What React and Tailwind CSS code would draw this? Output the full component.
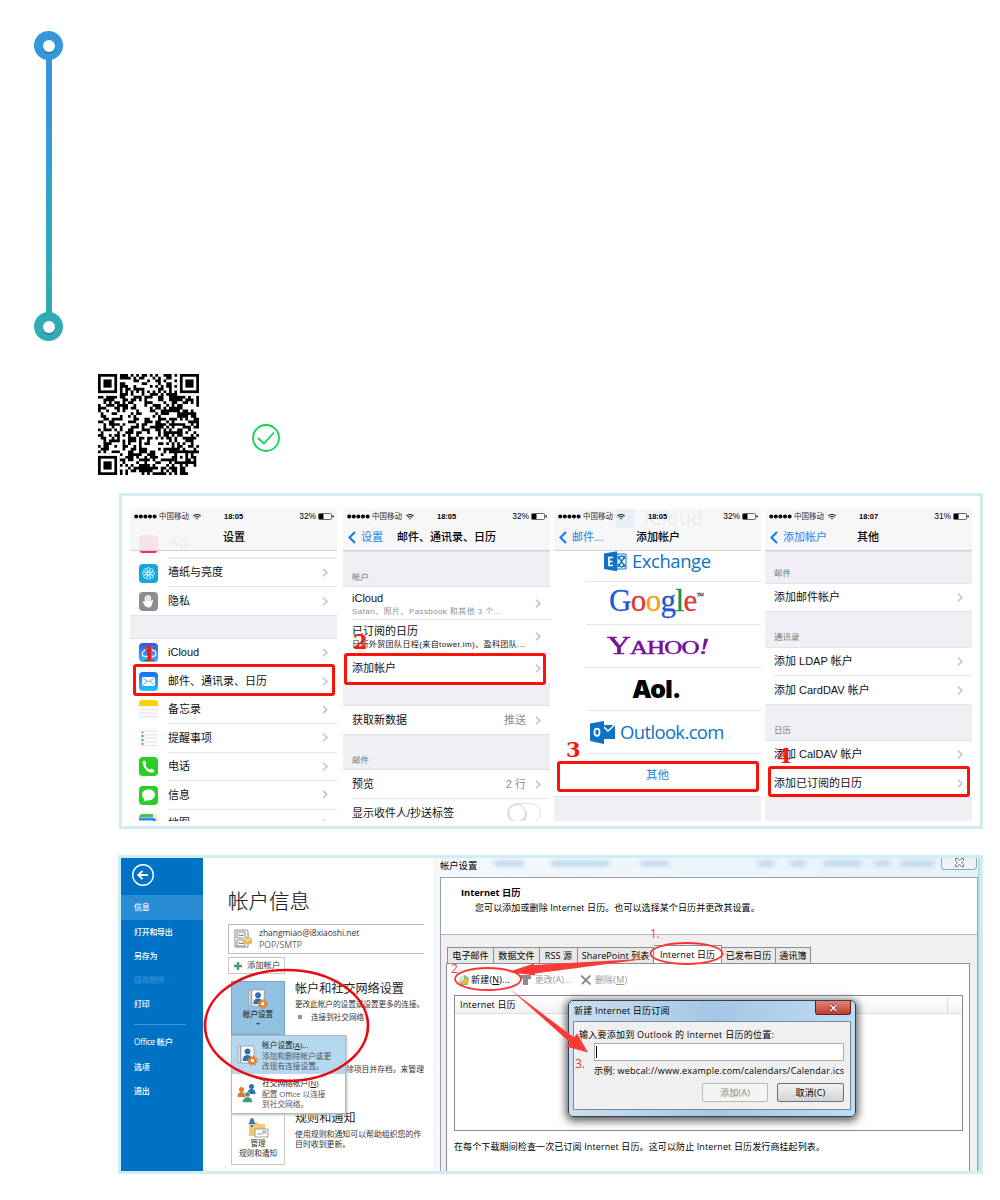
import React from "react";

const FINDER = (x, y) => (
  <g key={x + "-" + y}>
    <rect x={x - 1} y={y - 1} width="9" height="9" fill="#fff" />
    <rect x={x + 0.5} y={y + 0.5} width="6" height="6" fill="none" stroke="#000" strokeWidth="1" />
    <rect x={x + 2} y={y + 2} width="3" height="3" />
  </g>
);

function QrCode() {
  const n = 37;
  let seed = 90217;
  const cells = [];
  for (let y = 0; y < n; y++) {
    for (let x = 0; x < n; x++) {
      seed = (seed * 1103515245 + 12345) % 2147483648;
      const timing = x === 6 || y === 6;
      if (timing ? (x + y) % 2 === 0 : (seed >> 12) % 100 < 50) cells.push(`M${x} ${y}h1v1h-1z`);
    }
  }
  return (
    <svg className="block size-[101px]" viewBox="0 0 37 37" shapeRendering="geometricPrecision">
      <path d={cells.join("")} />
      {FINDER(0, 0)}
      {FINDER(30, 0)}
      {FINDER(0, 30)}
      <rect x="28" y="28" width="5" height="5" fill="#000" />
      <rect x="29" y="29" width="3" height="3" fill="#fff" />
      <rect x="30" y="30" width="1" height="1" />
    </svg>
  );
}

function Chevron() {
  return (
    <svg className="h-[9px] w-[6px] shrink-0" viewBox="0 0 6 9" fill="none" stroke="#b9b9be" strokeWidth="1.2">
      <path d="M1 .8 5 4.5 1 8.2" />
    </svg>
  );
}

function Header({ time, pct, back, title, titleClass, children }) {
  return (
    <div className="relative h-[42px] shrink-0 overflow-hidden border-b border-[#cfcfd2] bg-[#f7f7f8]">
      {children}
      <div className="relative flex h-[15px] items-center pl-[4px] pr-[3px] text-[7.5px] text-black">
        <svg className="h-[5px] w-[23px]" viewBox="0 0 23 5">
          {[2.2, 6.8, 11.4, 16, 20.6].map((x) => (
            <circle key={x} cx={x} cy="2.5" r="2" />
          ))}
        </svg>
        <span className="ml-[2px] w-[31px] whitespace-nowrap text-[#333]">中国移动</span>
        <svg className="ml-[3px] h-[6px] w-[8px]" viewBox="0 0 8 6" fill="none" stroke="#222" strokeWidth="1.1">
          <path d="M.4 2Q4-1 7.6 2M1.7 3.4Q4 1.6 6.3 3.4" />
          <path d="M3.2 4.8h1.6" />
        </svg>
        <span className="ml-[23px] w-[20px] whitespace-nowrap font-bold">{time}</span>
        <span className="ml-auto text-[8.4px]">{pct}</span>
        <svg className="ml-[2px] h-[7px] w-[16px]" viewBox="0 0 16 7">
          <rect x=".5" y=".5" width="13" height="6" rx="1" fill="#fff" stroke="#444" strokeWidth=".8" />
          <rect x="1" y="1" width="4.5" height="5" />
          <rect x="14.4" y="2.4" width="1.3" height="2" />
        </svg>
      </div>
      <div className="relative flex h-[26px] items-center text-[11px] leading-none">
        {back && (
          <span className="flex items-center whitespace-nowrap pl-[5px] text-[#1187f5]">
            <svg className="mr-[5px] h-[13px] w-[8px]" viewBox="0 0 8 13" fill="none" stroke="#0a7cf5" strokeWidth="2">
              <path d="M7 1 1.5 6.5 7 12" />
            </svg>
            {back}
          </span>
        )}
        <span className={"absolute whitespace-nowrap font-medium text-black " + titleClass}>{title}</span>
      </div>
    </div>
  );
}

function Phone({ children, className }) {
  return (
    <div className={"flex h-[312px] w-[207px] shrink-0 flex-col overflow-hidden bg-white text-[11px] text-[#111] " + className}>
      {children}
    </div>
  );
}

function AppRow({ icon, label, className = "", line = true }) {
  return (
    <div className={"flex shrink-0 items-center pl-[9px] " + className}>
      <div className="size-[19px] shrink-0">{icon}</div>
      <div className={"ml-[10px] flex h-full flex-1 items-center justify-between pr-[9px] " + (line ? "border-b border-[#e6e6e8]" : "")}>
        <span className="whitespace-nowrap">{label}</span>
        <Chevron />
      </div>
    </div>
  );
}

function Row({ label, value, className = "", line }) {
  return (
    <div className={"shrink-0 pl-[9px] " + className}>
      <div className={"flex h-full items-center justify-between pr-[9px] " + (line ? "border-b border-[#e6e6e8]" : "")}>
        <span className="whitespace-nowrap">{label}</span>
        <span className="flex items-center gap-[9px] text-[#8e8e93]">
          {value}
          <Chevron />
        </span>
      </div>
    </div>
  );
}

function Gap({ children, className }) {
  return (
    <div className={"flex shrink-0 items-end border-y border-[#e2e2e6] bg-[#efeff4] pl-[9px] text-[8.5px] text-[#77777c] " + className}>
      {children}
    </div>
  );
}

function Mark({ children, className }) {
  return (
    <span className={"absolute font-['DejaVu_Serif'] text-[21px] font-bold leading-none text-[#f8190c] " + className}>{children}</span>
  );
}

function RedBox({ className }) {
  return <div className={"absolute rounded-[3px] border-[3px] border-[#fb120a] " + className} />;
}

const icons = {
  wallpaper: (
    <svg viewBox="0 0 19 19">
      <rect width="19" height="19" rx="4" fill="#14a5dc" />
      <g fill="none" stroke="#d8f4ff" strokeWidth=".9">
        {[0, 45, 90, 135, 180, 225, 270, 315].map((a) => (
          <ellipse key={a} cx="9.5" cy="5.8" rx="1.7" ry="2.3" transform={`rotate(${a} 9.5 9.5)`} />
        ))}
        <circle cx="9.5" cy="9.5" r="1.5" />
      </g>
    </svg>
  ),
  privacy: (
    <svg viewBox="0 0 19 19">
      <rect width="19" height="19" rx="4" fill="#8c8c91" />
      <path d="M6 14 3.6 9.8q.7-1.3 2 0V5.2q.7-1.2 1.5 0V3.8q.8-1.1 1.6 0V3.2q.9-1 1.7 0v1q.9-.9 1.6.2v5l1-1.6q1.3-.3 1 .9L12.4 14q-2.500 3-6.400 0z" fill="#fff" />
      <path d="M7.200 5v4M8.900 4v5M10.600 4v5" stroke="#8c8c91" strokeWidth=".4" />
    </svg>
  ),
  icloud: (
    <svg viewBox="0 0 19 19">
      <defs>
        <linearGradient id="ic" x2="0" y2="1"><stop stopColor="#3a55dc" /><stop offset="1" stopColor="#34b8fa" /></linearGradient>
      </defs>
      <rect width="19" height="19" rx="4" fill="url(#ic)" />
      <path d="M5 13.500a3 3 0 0 1 0-5.500 4.500 4.500 0 0 1 8.500-.5 3 3 0 0 1 .8 6z" fill="none" stroke="#e4f4ff" strokeWidth="1.300" />
    </svg>
  ),
  mail: (
    <svg viewBox="0 0 19 19">
      <defs>
        <linearGradient id="ml" x2="0" y2="1"><stop stopColor="#1b6cf0" /><stop offset="1" stopColor="#22c6fb" /></linearGradient>
      </defs>
      <rect width="19" height="19" rx="4" fill="url(#ml)" />
      <rect x="3" y="5" width="13" height="9" rx="1" fill="#fff" />
      <path d="m3.500 5.500 6 4.500 6-4.500M3.500 13.500 8 9.200M15.500 13.500 11 9.200" fill="none" stroke="#3c9af3" strokeWidth=".8" />
    </svg>
  ),
  notes: (
    <svg viewBox="0 0 19 19">
      <rect width="19" height="19" rx="3" fill="#fbfbfb" />
      <path d="M0 6V3q0-3 3-3h13q3 0 3 3v3z" fill="#fdce0c" />
      <path d="M0 9.500h19M0 13h19M0 16.500h19" stroke="#dedede" strokeWidth=".8" />
    </svg>
  ),
  reminders: (
    <svg viewBox="0 0 19 19">
      <rect width="19" height="19" rx="3" fill="#fbfbfb" />
      <path d="M6 2h13M6 5.700h13M6 9.400h13M6 13h13M6 16.500h13" stroke="#dedede" strokeWidth=".8" />
      <circle cx="3.500" cy="3.200" r="1.200" fill="#ff9b21" />
      <circle cx="3.500" cy="7" r="1.200" fill="#1aa1f0" />
      <circle cx="3.500" cy="11" r="1.200" fill="#38cd38" />
      <circle cx="3.500" cy="15" r="1.200" fill="#ca69dc" />
    </svg>
  ),
  phone: (
    <svg viewBox="0 0 19 19">
      <rect width="19" height="19" rx="4" fill="#29cf25" />
      <path d="M5.500 3.300 7.400 6.500 6.300 8q1.500 3.400 4.600 4.800l1.500-1.200 3.200 2q-.8 2.300-2.900 2.200Q6 14.800 3.600 6.500q-.3-2.200 1.900-3.200z" fill="#fff" />
    </svg>
  ),
  messages: (
    <svg viewBox="0 0 19 19">
      <rect width="19" height="19" rx="4" fill="#29cf25" />
      <ellipse cx="9.500" cy="8.800" rx="6.500" ry="5.600" fill="#fff" />
      <path d="m5.500 12-.8 3.500 4-1.500z" fill="#fff" />
    </svg>
  ),
  maps: (
    <svg viewBox="0 0 19 19">
      <rect width="19" height="19" rx="4" fill="#f2f0e6" />
      <path d="M0 4q0-4 4-4h10v3H0z" fill="#4dc343" />
      <path d="M0 5h13q3 0 3 4v10" stroke="#2f8eea" strokeWidth="3" fill="none" />
      <path d="M0 8.500h11v6H0z" fill="#f8d66c" />
    </svg>
  ),
};

function PhonesPanel() {
  return (
    <div className="relative ml-[119px] mt-[19px] h-[336px] w-[864px] border-[3px] border-[#d0edf2] bg-white pl-[8px] pt-[13px] font-['Liberation_Sans','Noto_Sans_CJK_SC',sans-serif]">
      <div className="flex">
        <Phone className="">
          <Header time="18:05" pct="32%" title="设置" titleClass="left-[93px]">
            <div className="absolute left-[9px] top-[26px] flex items-center gap-[10px] text-[#ececee]">
              <div className="size-[19px] rounded-[4px] bg-[#fbe2e8]" />
              声音
            </div>
          </Header>
          <div className="flex h-[8px] shrink-0 pl-[10px]">
            <div className="h-[2px] w-[17px] rounded-b-[3px] bg-[#f52c5c]" />
            <div className="ml-[11px] flex-1 border-b-2 border-[#ececee]" />
          </div>
          <AppRow icon={icons.wallpaper} label="墙纸与亮度" className="h-[28px]" />
          <AppRow icon={icons.privacy} label="隐私" className="h-[28px]" line={false} />
          <Gap className="h-[24px]" />
          <AppRow icon={icons.icloud} label="iCloud" className="h-[28px] pb-[1px]" line={false} />
          <AppRow icon={icons.mail} label="邮件、通讯录、日历" className="h-[28.5px]" line={false} />
          <AppRow icon={icons.notes} label="备忘录" className="h-[28.5px]" />
          <AppRow icon={icons.reminders} label="提醒事项" className="h-[28.5px]" />
          <AppRow icon={icons.phone} label="电话" className="h-[28.5px]" />
          <AppRow icon={icons.messages} label="信息" className="h-[28.5px]" />
          <AppRow icon={icons.maps} label="地图" className="h-[28.5px]" />
        </Phone>

        <Phone className="ml-[6px]">
          <Header time="18:05" pct="32%" back="设置" title="邮件、通讯录、日历" titleClass="left-[54px]" />
          <Gap className="h-[36px] pb-[2px]">帐户</Gap>
          <Row
            className="h-[33px]"
            line
            label={
              <span className="flex flex-col pt-[3px] leading-[13px]">
                <span>iCloud</span>
                <span className="text-[8px] tracking-[0.4px] text-[#8e8e93]">Safari、照片、Passbook 和其他 3 个...</span>
              </span>
            }
          />
          <Row
            className="h-[34px]"
            line
            label={
              <span className="flex w-[176px] flex-col pt-[3px] leading-[13px]">
                <span>已订阅的日历</span>
                <span className="text-[8px] tracking-[0.4px]">日新外贸团队日程(来自tower.im)、盈科团队...</span>
              </span>
            }
          />
          <Row className="h-[29px]" label="添加帐户" />
          <Gap className="h-[23px]" />
          <Row className="h-[28px]" label="获取新数据" value="推送" />
          <Gap className="h-[36px] pb-[2px]">邮件</Gap>
          <Row className="h-[29px]" label="预览" value="2 行" line />
          <div className="flex h-[28px] shrink-0 items-center justify-between pl-[9px] pr-[9px]">
            <span>显示收件人/抄送标签</span>
            <div className="h-[20px] w-[34px] rounded-full border border-[#e0e0e2] bg-white">
              <div className="size-[18px] rounded-full border border-[#cfcfd2] shadow-[1px_2px_2px_#ddd]" />
            </div>
          </div>
        </Phone>

        <Phone className="ml-[4px]">
          <Header time="18:05" pct="32%" back="邮件..." title="添加帐户" titleClass="left-[82px]">
            <div className="absolute left-[61px] top-[-2px] flex items-center gap-[9px] font-['Open_Sans'] text-[20px] leading-[22px] text-[#ebebed]">
              <div className="size-[20px] rounded-[4px] bg-[#e8f0fa]" />
              iCloud
            </div>
          </Header>
          <div className="ml-[32px] flex h-[31px] shrink-0 items-start border-b border-[#e6e6e8] pl-[17px] font-['Open_Sans'] text-[18.5px] leading-[20px] tracking-[-0.45px] text-[#0e72c6]">
            <svg className="mr-[3px] h-[21px] w-[26px]" viewBox="0 0 26 21">
              <path d="M14 3h9v15h-9z" fill="#fff" stroke="#0e72c6" />
              <path d="m15 5 7 11M22 5l-7 11M15 8q4-6 7 0M15 13q4 6 7 0" fill="none" stroke="#0e72c6" strokeWidth="1.400" />
              <path d="m1 2.500 13-2.300v20L1 18z" fill="#0e72c6" />
              <path d="M10 6.500H6v8h4M6 10.500h3.500" stroke="#fff" strokeWidth="1.700" fill="none" />
            </svg>
            Exchange
          </div>
          <div className="ml-[32px] flex h-[43px] shrink-0 items-start border-b border-[#e6e6e8] pl-[23px] pt-[2px] font-['Liberation_Serif'] text-[31px] leading-[34px] tracking-[-0.6px] [-webkit-text-stroke:0.3px]">
            <span className="text-[#2456d4]">G</span>
            <span className="text-[#dd3838]">o</span>
            <span className="text-[#efa416]">o</span>
            <span className="text-[#2456d4]">g</span>
            <span className="text-[#179341]">l</span>
            <span className="text-[#dd3838]">e</span>
            <span className="mt-[8px] text-[5px] leading-none text-[#555]">TM</span>
          </div>
          <div className="ml-[32px] flex h-[43px] shrink-0 items-center border-b border-[#e6e6e8] pb-[2px] pl-[21px] font-['Liberation_Serif'] leading-none text-[#77159a]">
            <span className="flex origin-left scale-x-[1.32] items-baseline tracking-[-0.7px] [-webkit-text-stroke:0.5px]">
              <span className="text-[25px]">Y</span>
              <span className="text-[19px]">AHOO</span>
              <span className="text-[24px] italic">!</span>
            </span>
          </div>
          <div className="ml-[32px] flex h-[43px] shrink-0 items-center border-b border-[#e6e6e8] pl-[46px] font-['Inter'] text-[25px] font-black leading-none tracking-[-0.6px] text-black">
            Aol.
          </div>
          <div className="ml-[32px] flex h-[43px] shrink-0 items-center border-b border-[#e6e6e8] pl-[4px] font-['Open_Sans'] text-[18.500px] tracking-[-0.65px] text-[#0e72c6]">
            <svg className="mr-[4px] h-[23px] w-[26px] shrink-0" viewBox="0 0 26 23">
              <path d="M14 4h11v14H14z" fill="#0e72c6" />
              <path d="m14 6 4 4 7-6.500" fill="none" stroke="#fff" strokeWidth="1.500" />
              <path d="M0 2.500 14 0v23L0 20z" fill="#0e72c6" />
              <ellipse cx="7" cy="11.300" rx="2.600" ry="3.600" fill="none" stroke="#fff" strokeWidth="1.700" />
            </svg>
            Outlook.com
          </div>
          <div className="flex h-[42px] shrink-0 items-center justify-center pt-[2px] text-[11.500px] text-[#1187e8]">其他</div>
          <Gap className="h-[26px]" />
        </Phone>

        <Phone className="ml-[4px]">
          <Header time="18:07" pct="31%" back="添加帐户" title="其他" titleClass="left-[92px]" />
          <Gap className="h-[33px] pb-[3px]">邮件</Gap>
          <Row className="h-[27px]" label="添加邮件帐户" />
          <Gap className="h-[37px] pb-[3px]">通讯录</Gap>
          <Row className="h-[28px]" label="添加 LDAP 帐户" line />
          <Row className="h-[28px]" label="添加 CardDAV 帐户" />
          <Gap className="h-[37px] pb-[3px]">日历</Gap>
          <Row className="h-[28px]" label="添加 CalDAV 帐户" line />
          <Row className="h-[28px]" label="添加已订阅的日历" />
          <Gap className="h-[30px]" />
        </Phone>
      </div>
      <RedBox className="left-[11px] top-[168px] h-[32px] w-[202px]" />
      <RedBox className="left-[222px] top-[157px] h-[32px] w-[202px]" />
      <RedBox className="left-[435px] top-[265px] h-[31px] w-[202px]" />
      <RedBox className="left-[646px] top-[270px] h-[31px] w-[202px]" />
      <Mark className="left-[20px] top-[147px]">1</Mark>
      <Mark className="left-[231px] top-[135px]">2</Mark>
      <Mark className="left-[444px] top-[243px]">3</Mark>
      <Mark className="left-[655px] top-[249px]">4</Mark>
    </div>
  );
}

function UserBook({ className }) {
  return (
    <svg className={className} viewBox="0 0 21 21">
      <path d="M1 1h2v17H1zM4 1h13v17H4z" fill="#fff" stroke="#8a8a8a" strokeWidth=".7" />
      <circle cx="10.500" cy="6.500" r="3" fill="#2c70b3" />
      <path d="M5.500 16q0-6 5-6t5 6z" fill="#2c70b3" />
      <circle cx="15.500" cy="15.500" r="2.800" fill="#fff" stroke="#e57d32" strokeWidth="2" />
      <circle cx="15.500" cy="15.500" r="4.400" fill="none" stroke="#e57d32" strokeWidth="1.600" strokeDasharray="1.900 1.555" />
    </svg>
  );
}

function Sidebar() {
  return (
    <div className="flex w-[82px] shrink-0 flex-col bg-[#0072c6] text-[8px] font-medium leading-none tracking-[-0.3px] text-white">
      <svg className="ml-[10px] mt-[5px] size-[24px]" viewBox="0 0 24 24" fill="none" stroke="#fff">
        <circle cx="12" cy="12" r="10.300" strokeWidth="1.400" />
        <path d="M17 12H7.500m4-4.200L7.300 12l4.200 4.200" strokeWidth="1.800" />
      </svg>
      <div className="mt-[8px] flex h-[25px] items-center bg-[#2a8dd4] pb-[1px] pl-[13px]">信息</div>
      <div className="flex h-[24px] items-center pb-[1px] pl-[13px]">打开和导出</div>
      <div className="flex h-[24px] items-center pb-[1px] pl-[13px]">另存为</div>
      <div className="flex h-[24px] items-center pl-[13px] text-[#3592d6]">保存附件</div>
      <div className="flex h-[24px] items-center pl-[13px]">打印</div>
      <div className="ml-[13px] mt-[8px] w-[52px] border-b border-[#3b95d8]" />
      <div className="mt-[5px] flex h-[24px] items-center pl-[13px] text-[8.300px]">Office 帐户</div>
      <div className="flex h-[25px] items-center pl-[13px]">选项</div>
      <div className="flex h-[24px] items-center pl-[13px]">退出</div>
    </div>
  );
}

function AccountInfo() {
  return (
    <div className="relative w-[221px] shrink-0 overflow-hidden pl-[25px] text-[7.600px] leading-none text-[#333]">
      <div className="mt-[30px] h-[26px] text-[20.500px] font-light leading-[26px] text-[#222] [-webkit-text-stroke:0.2px]">帐户信息</div>
      <div className="mt-[10px] flex h-[30px] items-center border border-r-0 border-[#bcbcbc] pl-[5px]">
        <svg className="h-[20px] w-[18px]" viewBox="0 0 18 20">
          <path d="M1 1h11l2 1v16H1zM3 3h8v6H3zM3 11h8v6H3z" fill="#fff" stroke="#8a8a8a" />
          <path d="M5 5v1.500h4V5M5 13v1.500h4V13" fill="none" stroke="#888" />
          <path d="M9 8h9v7H9z" fill="#ecb95c" />
          <path d="m9 8 4.500 4L18 8" fill="none" stroke="#fff" />
        </svg>
        <div className="ml-[7px] whitespace-nowrap font-['Open_Sans'] text-[8.500px] leading-[13.500px]">
          <div className="tracking-[-0.05px]">zhangmiao@i8xiaoshi.net</div>
          <div className="text-[8.700px] text-[#666]">POP/SMTP</div>
        </div>
      </div>
      <div className="mt-[3px] flex h-[17px] w-[57px] items-center border border-[#c6c6c6] pl-[5px] text-[8.300px]">
        <svg className="mr-[5px] size-[8px]" viewBox="0 0 8 8"><path d="M4 0v8M0 4h8" stroke="#4c9b77" strokeWidth="2.400" /></svg>
        添加帐户
      </div>
      <div className="mt-[7px] flex">
        <div className="ml-[3px] flex h-[54px] w-[54px] shrink-0 flex-col items-center border border-[#6fa6cf] bg-[#92c0e0] pt-[7px] text-[7.600px] font-medium">
          <UserBook className="size-[20px]" />
          <span className="mt-[2px] whitespace-nowrap">帐户设置</span>
          <span className="mt-[4px] size-0 border-x-[2px] border-t-[2px] border-x-transparent border-t-[#333]" />
        </div>
        <div className="ml-[10px] whitespace-nowrap">
          <div className="mt-[1px] text-[12.100px] leading-[14px] text-[#222]">帐户和社交网络设置</div>
          <div className="mt-[3px] leading-[10px]">更改此帐户的设置或设置更多的连接。</div>
          <div className="mt-[3px] flex items-center leading-[10px]">
            <span className="ml-[3px] mr-[9px] size-[4px] bg-[#999]" />连接到社交网络
          </div>
        </div>
      </div>
      <div className="ml-[118px] mt-[29px] h-[11px] whitespace-nowrap text-[7.800px] leading-[11px]">除项目并存档，来管理</div>
      <div className="mt-[37px] flex">
        <div className="ml-[3px] flex h-[53px] w-[54px] shrink-0 flex-col items-center border border-[#c6c6c6] pt-[4px] leading-[9.500px]">
          <svg className="h-[21px] w-[22px]" viewBox="0 0 22 21">
            <path d="M2 5h8l2 2h6v12H2z" fill="#f0ca78" />
            <path d="M1 7q2-1 2-4 2-4 4 0 0 3 2 4zM4 8h2v2H4z" fill="#3277b6" />
            <path d="M8 12h13v8H8zM16 14h3v2h-3zM10 17h6" fill="#fff" stroke="#888" strokeWidth=".8" />
          </svg>
          <span className="mt-[1px]">管理</span>
          <span className="whitespace-nowrap">规则和通知</span>
        </div>
        <div className="ml-[10px] mt-[-2px] whitespace-nowrap text-[7.900px] leading-[10px]">
          <div className="text-[12.100px] leading-[16px] text-[#222]">规则和通知</div>
          <div className="mt-[3px]">使用规则和通知可以帮助组织您的作</div>
          <div>目时收到更新。</div>
        </div>
      </div>

      <div className="absolute left-[28px] top-[177px] h-[79px] w-[115px] border border-[#b8b8b8] bg-white text-[7.700px] leading-[10px] shadow-[1px_1px_2px_#bbb]">
        <div className="flex h-[38px] items-center bg-[#b3d8f0] pl-[5px]">
          <UserBook className="size-[21px] shrink-0" />
          <div className="ml-[4px] whitespace-nowrap text-[#555]">
            <div className="leading-[12px] text-[#222]">帐户设置(<u>A</u>)...</div>
            <div>添加和删除帐户或更</div>
            <div>改现有连接设置。</div>
          </div>
        </div>
        <div className="flex h-[37px] items-center pl-[5px]">
          <svg className="size-[20px] shrink-0" viewBox="0 0 20 20">
            <g fill="#2c70b3"><circle cx="14.500" cy="3.500" r="2.500" /><path d="M10.500 11q0-5 4-5t4 5z" /></g>
            <g fill="#df7b37"><circle cx="4.500" cy="6.500" r="2.500" /><path d="M.5 14q0-5 4-5t4 5z" /></g>
            <g fill="#459678" stroke="#fff" strokeWidth=".5"><circle cx="10.500" cy="11.500" r="2.600" /><path d="M5.500 19.500q0-5.500 5-5.500t5 5.500z" /></g>
          </svg>
          <div className="ml-[5px] whitespace-nowrap text-[#555]">
            <div className="leading-[12px] text-[#222]">社交网络帐户(<u>N</u>)</div>
            <div>配置 Office 以连接</div>
            <div>到社交网络。</div>
          </div>
        </div>
      </div>
    </div>
  );
}

function Tab({ children, className }) {
  return (
    <div className={"flex items-center justify-center whitespace-nowrap border border-b-0 border-[#8c8e94] tracking-[0.1px] " + className}>{children}</div>
  );
}

const SMUDGES = [
  "left-[58px] w-[30px]", "left-[115px] w-[58px]", "left-[205px] w-[28px]", "left-[322px] w-[16px]",
  "left-[354px] w-[16px]", "left-[388px] w-[38px]", "left-[438px] w-[16px]", "left-[464px] w-[34px]",
];

function SettingsWindow() {
  return (
    <div className="relative flex flex-1 flex-col overflow-hidden border-r-2 border-[#b4dff0] bg-gradient-to-r from-[#f3f9fd] to-[#e6f2f9] pl-[4px] text-[9px] leading-none text-black">
      {SMUDGES.map((s) => (
        <div key={s} className={"absolute top-[3px] h-[5px] bg-[#b9d3ea] blur-[2px] " + s} />
      ))}
      <div className="relative flex h-[19px] shrink-0 justify-between">
        <span className="pt-[3px] text-[9.300px]">帐户设置</span>
        <div className="mr-[1px] flex h-[12px] w-[36px] items-center justify-center rounded-b-[4px] border border-t-0 border-[#9aa3ad] bg-[#edf4f9] pb-[2px]">
          <svg className="size-[9px]" viewBox="0 0 9 9" fill="#fff" stroke="#555" strokeWidth=".8"><path d="M.5.5h2l2 2.200L6.500.5h2v1.800L6.300 4.500l2.200 2.200v1.800h-2l-2-2.200-2 2.200h-2V6.700l2.200-2.200L.5 2.300z" /></svg>
        </div>
      </div>
      <div className="relative flex flex-1 flex-col border-l border-r border-t border-[#9b9fa6] bg-[#f0f0f0]">
        <div className="h-[57px] shrink-0 border-b border-[#b5b5b5] bg-white pl-[20px] pt-[9px]">
          <div className="text-[9.300px] font-bold leading-[11px]">Internet 日历</div>
          <div className="ml-[14px] mt-[4px] whitespace-nowrap leading-[11px] tracking-[0.09px]">您可以添加或删除 Internet 日历。也可以选择某个日历并更改其设置。</div>
        </div>
        <div className="ml-[6px] flex h-[28px] shrink-0 items-end">
          <Tab className="h-[16px] w-[47px] bg-[#e8e8e8]">电子邮件</Tab>
          <Tab className="h-[16px] w-[46px] border-l-0 bg-[#e8e8e8]">数据文件</Tab>
          <Tab className="h-[16px] w-[38px] border-l-0 bg-[#e8e8e8]">RSS 源</Tab>
          <Tab className="h-[16px] w-[76px] border-l-0 bg-[#e8e8e8]">SharePoint 列表</Tab>
          <Tab className="h-[18px] w-[68px] border-l-0 bg-white">Internet 日历</Tab>
          <Tab className="h-[16px] w-[54px] border-l-0 bg-[#e8e8e8]">已发布日历</Tab>
          <Tab className="h-[16px] w-[35px] border-l-0 bg-[#e8e8e8]">通讯簿</Tab>
        </div>
        <div className="ml-[5px] mr-[7px] flex-1 border border-b-0 border-[#8c8e94] bg-white pl-[7px] pr-[6px]">
          <div className="flex h-[31px] items-center whitespace-nowrap text-[#999]">
            <svg className="ml-[4px] size-[11px]" viewBox="0 0 11 11"><path d="m1 4 6-3 4 3-1 7H2z" fill="#8fb590" /><path d="m3 6 6-2 1 6H3z" fill="#e6b830" /><path d="m1 3 5-1v4L1 8z" fill="#d5e5f3" /></svg>
            <span className="ml-[2px] tracking-[0.2px] text-black">新建(<u>N</u>)...</span>
            <svg className="ml-[10px] h-[10px] w-[11px]" viewBox="0 0 11 10" fill="#8d8d8d"><path d="M0 4V0h11v4H8v6H3V4z" /></svg>
            <span className="ml-[4px]">更改(A)...</span>
            <svg className="ml-[10px] size-[10px]" viewBox="0 0 10 10" stroke="#888" strokeWidth="1.800"><path d="m0 .5 9.500 9M9.500.5 1 9" /></svg>
            <span className="ml-[4px] tracking-[0.2px]">删除(<u>M</u>)</span>
          </div>
          <div className="h-[136px] border border-[#858a93] bg-white">
            <div className="flex h-[18px] items-center border-b border-[#dedede] bg-gradient-to-b from-white to-[#f2f3f5] pl-[5px] tracking-[0.15px]">
              Internet 日历
              <span className="ml-auto mr-[14px] h-full border-r border-[#dedede]" />
            </div>
          </div>
          <div className="mt-[10px] whitespace-nowrap leading-[11px] tracking-[0.12px]">在每个下载期间检查一次已订阅 Internet 日历。这可以防止 Internet 日历发行商挂起列表。</div>
        </div>
      </div>
      <CalendarDialog />
    </div>
  );
}

function CalendarDialog() {
  return (
    <div className="absolute left-[132px] top-[142px] h-[117px] w-[288px] rounded-[5px] border border-[#36404b] bg-gradient-to-r from-[#cbdff0] via-[#a4c7e6] to-[#bddbf3] px-[4px] shadow-[0_2px_9px_2px_rgba(0,0,0,0.65)]">
      <div className="flex h-[20px] justify-between">
        <span className="whitespace-nowrap pl-[1px] pt-[5px] tracking-[0.2px]">新建 Internet 日历订阅</span>
        <div className="flex h-[14px] w-[36px] items-center justify-center rounded-b-[3px] border border-t-0 border-[#60201c] bg-gradient-to-b from-[#dc8376] to-[#c53a28]">
          <svg className="h-[8px] w-[9px]" viewBox="0 0 9 8"><path d="m1.500 1 6 6M7.500 1l-6 6" stroke="#623" strokeWidth="2.600" /><path d="m1.500 1 6 6M7.500 1l-6 6" stroke="#fff" strokeWidth="1.500" /></svg>
        </div>
      </div>
      <div className="h-[89px] border border-[#79899a] bg-[#f0f0f0] pl-[5px] pr-[6px] pt-[7px]">
        <div className="whitespace-nowrap leading-[12px] tracking-[0.25px]">输入要添加到 Outlook 的 Internet 日历的位置:</div>
        <div className="ml-[15px] mt-[2px] flex h-[18px] items-center border border-[#a9aeb6] bg-white pl-[1px]">
          <span className="h-[12px] w-px bg-black" />
        </div>
        <div className="ml-[15px] mt-[4px] whitespace-nowrap leading-[12px] tracking-[0.23px]">示例: webcal://www.example.com/calendars/Calendar.ics</div>
        <div className="mt-[6px] flex justify-end gap-[9px]">
          <div className="flex h-[19px] w-[66px] items-center justify-center rounded-[2px] border border-[#b5b8bb] bg-[#f4f4f4] tracking-[0.2px] text-[#888]">添加(A)</div>
          <div className="flex h-[19px] w-[67px] items-center justify-center rounded-[2px] border border-[#707070] bg-gradient-to-b from-[#f2f2f2] to-[#d3d3d3] tracking-[0.2px]">取消(C)</div>
        </div>
      </div>
    </div>
  );
}

function OutlookPanel() {
  return (
    <div className="relative ml-[118px] mt-[26px] flex h-[319px] w-[865px] border-[3px] border-[#d0edf2] bg-white font-['Open_Sans','Noto_Sans_CJK_SC',sans-serif]">
      <Sidebar />
      <AccountInfo />
      <div className="w-[12px] shrink-0 bg-gradient-to-r from-white from-70% to-[#e6f3fc]" />
      <SettingsWindow />
      <svg className="absolute left-0 top-0 h-[313px] w-[859px]" viewBox="121 858 859 313">
        <ellipse cx="286.500" cy="1025.500" rx="81.500" ry="55.500" fill="none" stroke="#e90b13" strokeWidth="2.700" />
        <g fill="none" stroke="#f33" strokeWidth="1.800">
          <ellipse cx="686.500" cy="953.500" rx="36" ry="10.500" />
          <ellipse cx="488" cy="979" rx="33" ry="11" />
        </g>
        <g fill="#fb3a37">
          <path d="m649 958.500-115 6.500v-1.500L508 972l27 3.500v-2z" />
          <path d="m511 990 63 47.500 3-4 11 19-22-6 4-4z" />
          <g className="font-['Open_Sans'] text-[12px]">
            <text x="650" y="938">1.</text>
            <text x="451" y="973">2</text>
            <text x="575" y="1068">3.</text>
          </g>
        </g>
      </svg>
    </div>
  );
}

function Ring({ className }) {
  return (
    <div className={"flex size-[29px] items-center justify-center rounded-full " + className}>
      <div className="size-[12px] rounded-full bg-white shadow-[0_2px_1px_rgba(0,0,0,0.18)]" />
    </div>
  );
}

export default function App() {
  return (
    <div className="h-[1200px] w-[1000px] overflow-hidden bg-white">
      <div className="ml-[34px] flex w-[29px] flex-col items-center pt-[31px]">
        <Ring className="bg-[#3498db]" />
        <div className="my-[-1px] h-[254px] w-[6px] bg-gradient-to-b from-[#3498db] from-20% to-[#32acb4] to-90%" />
        <Ring className="bg-[#32acb4]" />
      </div>
      <div className="ml-[98px] mt-[33px] flex h-[100px]">
        <QrCode />
        <svg className="ml-[52px] mt-[49px] size-[30px]" viewBox="0 0 30 30" fill="none" stroke="#16d254">
          <circle cx="15" cy="15" r="13" strokeWidth="1.800" />
          <path d="m7 15 6 5.500 10-11" strokeWidth="1.800" />
        </svg>
      </div>
      <PhonesPanel />
      <OutlookPanel />
    </div>
  );
}
